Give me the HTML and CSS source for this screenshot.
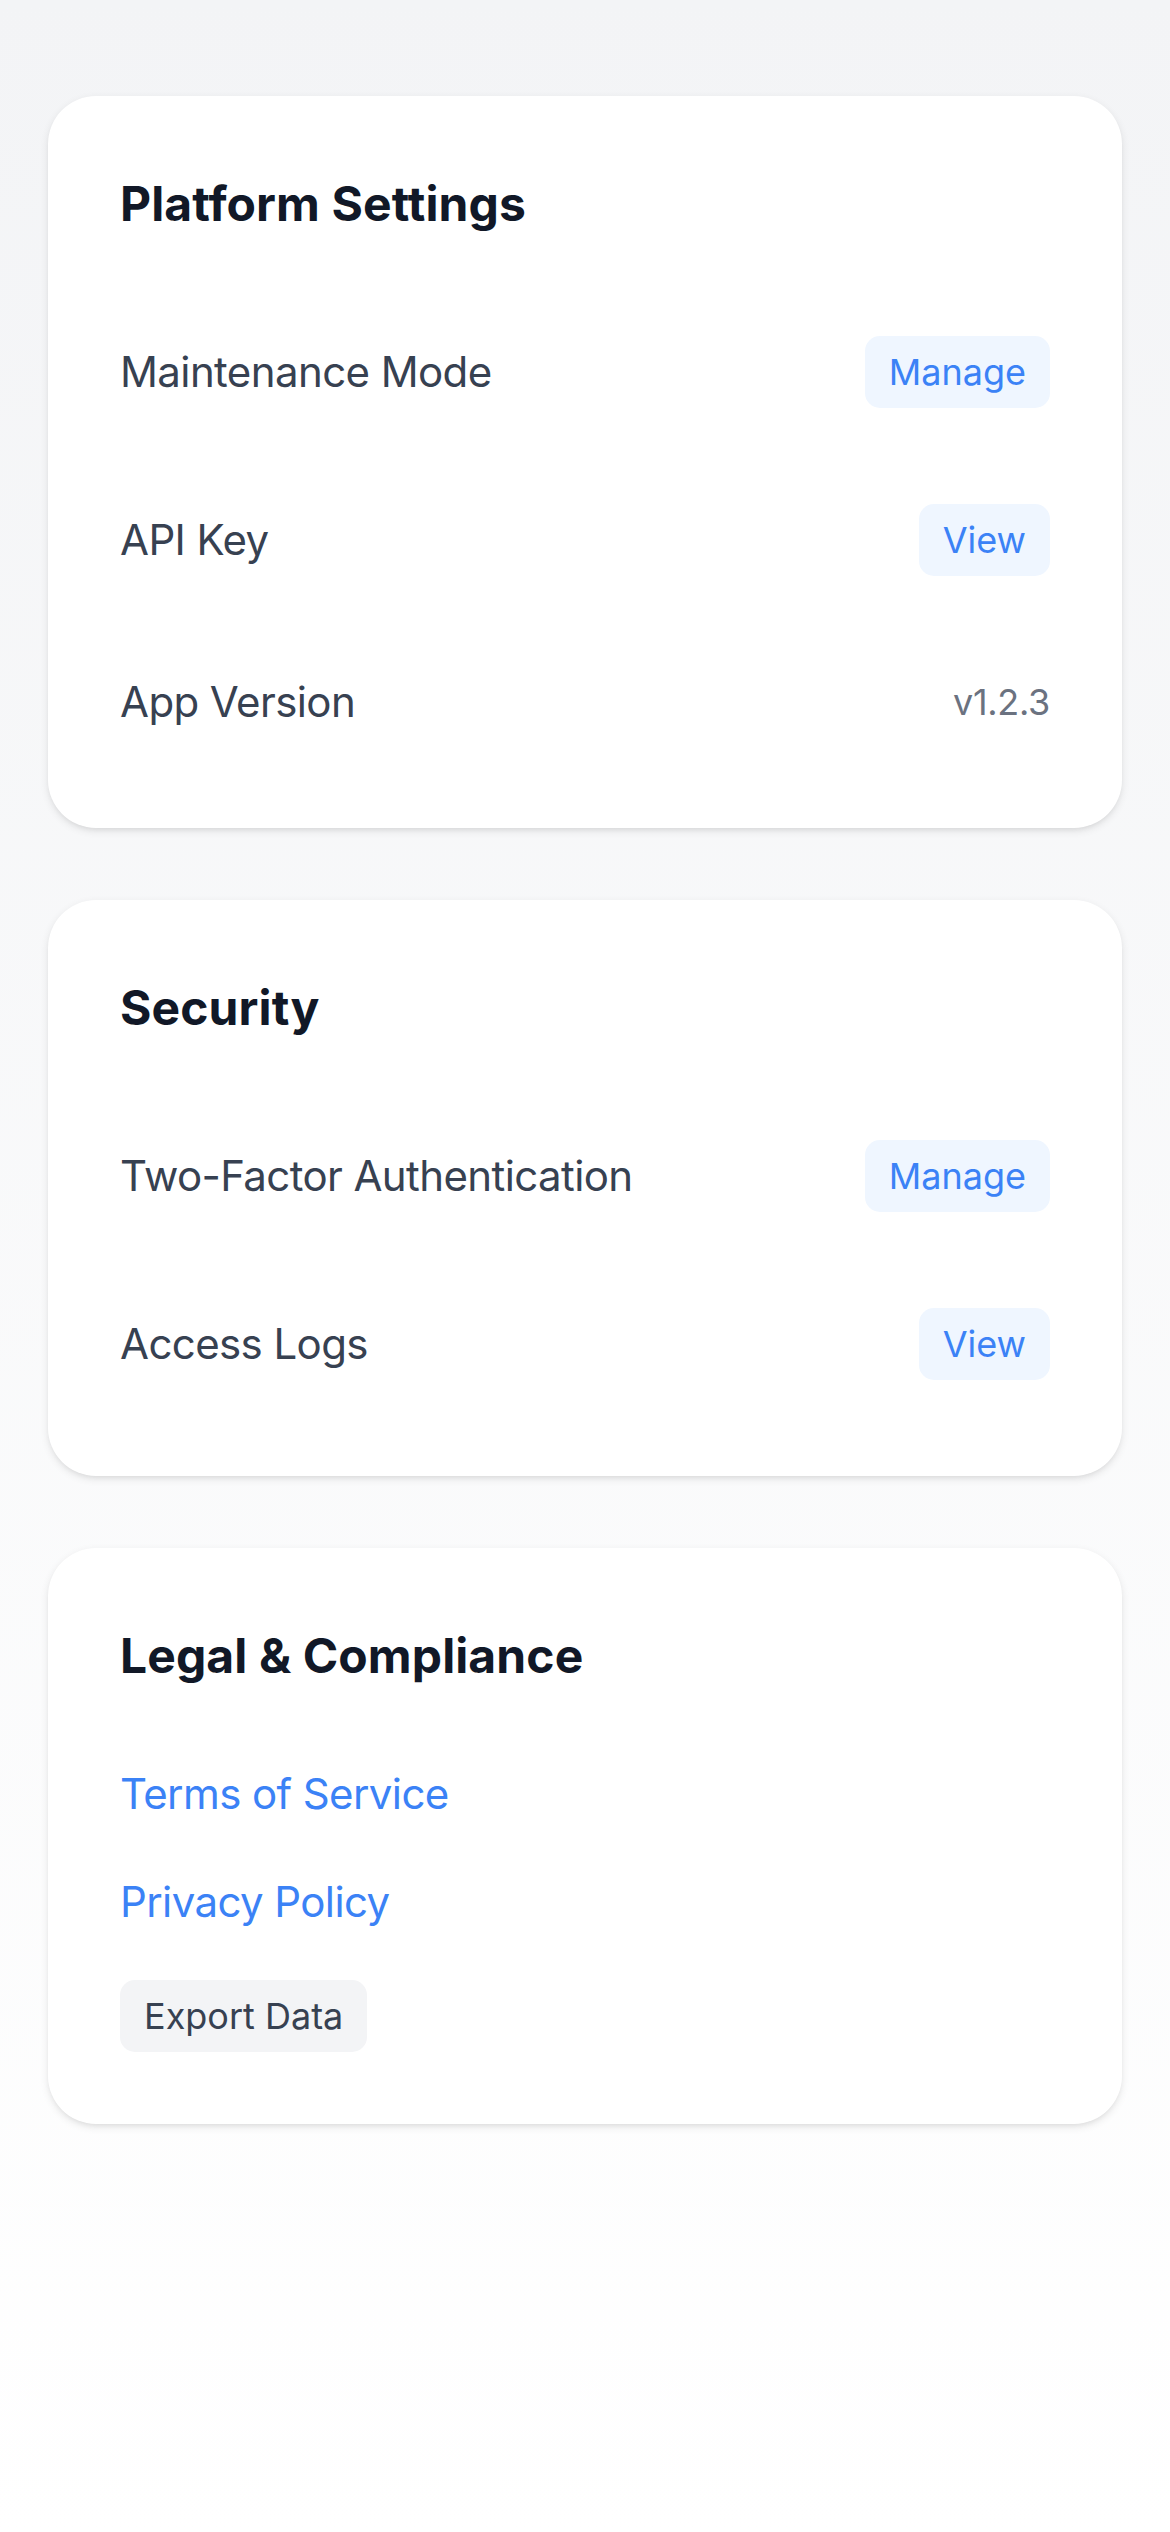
FILE: index.html
```html
<!DOCTYPE html>
<html lang="en">
<head>
<meta charset="utf-8">
<title>Settings</title>
<link rel="stylesheet" href="styles.css">
</head>
<body>
<main class="page">
  <section class="card">
    <h2 class="card-title">Platform Settings</h2>
    <div class="rows">
      <div class="row">
        <span class="row-label">Maintenance Mode</span>
        <button class="btn-soft">Manage</button>
      </div>
      <div class="row">
        <span class="row-label">API Key</span>
        <button class="btn-soft">View</button>
      </div>
      <div class="row">
        <span class="row-label">App Version</span>
        <span class="version">v1.2.3</span>
      </div>
    </div>
  </section>

  <section class="card">
    <h2 class="card-title">Security</h2>
    <div class="rows">
      <div class="row">
        <span class="row-label">Two-Factor Authentication</span>
        <button class="btn-soft">Manage</button>
      </div>
      <div class="row">
        <span class="row-label">Access Logs</span>
        <button class="btn-soft">View</button>
      </div>
    </div>
  </section>

  <section class="card">
    <h2 class="card-title">Legal &amp; Compliance</h2>
    <div class="links">
      <a class="link" href="#">Terms of Service</a>
      <a class="link" href="#">Privacy Policy</a>
      <button class="btn-gray">Export Data</button>
    </div>
  </section>
</main>
</body>
</html>
```

FILE: styles.css
```css
html, body {
  margin: 0;
  padding: 0;
}

body {
  min-height: 100vh;
  background: linear-gradient(to bottom, #f3f4f6 0%, #ffffff 100%);
  font-family: Inter, "Noto Sans", "Liberation Sans", sans-serif;
  -webkit-font-smoothing: antialiased;
}

.page {
  box-sizing: border-box;
  padding: 96px 48px;
}

.card {
  background: #ffffff;
  border-radius: 48px;
  padding: 72px;
  margin-bottom: 72px;
  box-shadow: 0 3px 9px rgba(0, 0, 0, 0.09), 0 3px 6px -3px rgba(0, 0, 0, 0.09);
}

.card-title {
  margin: 0 0 72px;
  font-size: 48px;
  line-height: 72px;
  font-weight: 700;
  color: #111827;
  letter-spacing: 0.1px;
}

.rows {
  display: flex;
  flex-direction: column;
  gap: 48px;
}

.row {
  display: flex;
  justify-content: space-between;
  align-items: center;
  padding: 24px 0;
}

.row-label {
  font-size: 42px;
  line-height: 60px;
  color: #374151;
  letter-spacing: -0.6px;
}

.version {
  font-size: 36px;
  line-height: 48px;
  color: #6b7280;
  letter-spacing: -0.3px;
}

.btn-soft,
.btn-gray {
  font-family: inherit;
  font-size: 36px;
  line-height: 48px;
  font-weight: 400;
  padding: 12px 24px;
  border: none;
  border-radius: 15px;
  cursor: pointer;
}

.btn-soft {
  background: #eff6ff;
  color: #3b82f6;
}

.btn-gray {
  background: #f3f4f6;
  color: #374151;
  align-self: flex-start;
}

.links {
  display: flex;
  flex-direction: column;
  gap: 48px;
}

.link {
  font-size: 42px;
  line-height: 60px;
  color: #3b82f6;
  text-decoration: none;
  letter-spacing: -0.6px;
}
```
